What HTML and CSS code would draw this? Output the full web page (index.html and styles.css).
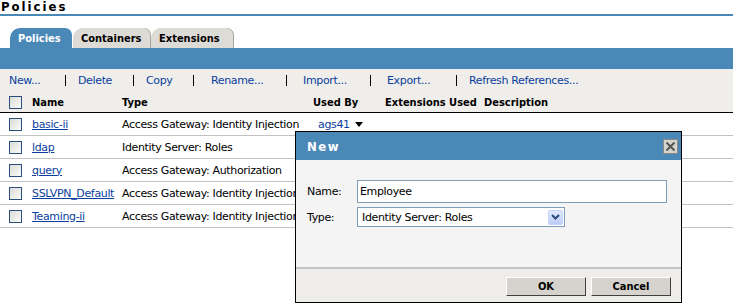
FILE: index.html
```html
<!DOCTYPE html>
<html>
<head>
<meta charset="utf-8">
<link rel="stylesheet" href="styles.css">
</head>
<body>
<div class="page">
  <div class="title">Policies</div>
  <div class="tabs">
    <div class="tab active t1">Policies</div>
    <div class="tab t2">Containers</div>
    <div class="tab t3">Extensions</div>
  </div>
  <div class="bluebar"></div>
  <div class="toolarea">
    <div class="toolbar">
      <a class="tl w56">New...</a><span class="sep s13"></span>
      <a class="tl w55">Delete</a><span class="sep s13"></span>
      <a class="tl w47">Copy</a><span class="sep s18"></span>
      <a class="tl w75">Rename...</a><span class="sep s17"></span>
      <a class="tl w67">Import...</a><span class="sep s17"></span>
      <a class="tl w69">Export...</a><span class="sep s13"></span>
      <a class="tl">Refresh References...</a>
    </div>
    <div class="row head">
      <span class="c-chk"><span class="cb"></span></span>
      <span class="c-name">Name</span>
      <span class="c-type">Type</span>
      <span class="c-used">Used By</span>
      <span class="c-ext">Extensions Used</span>
      <span class="c-desc">Description</span>
    </div>
  </div>
  <div class="row">
    <span class="c-chk"><span class="cb"></span></span>
    <span class="c-name"><a>basic-ii</a></span>
    <span class="c-type">Access Gateway: Identity Injection</span>
    <span class="c-used"><a class="plain">ags41</a><span class="tri"></span></span>
  </div>
  <div class="row">
    <span class="c-chk"><span class="cb"></span></span>
    <span class="c-name"><a>ldap</a></span>
    <span class="c-type">Identity Server: Roles</span>
  </div>
  <div class="row">
    <span class="c-chk"><span class="cb"></span></span>
    <span class="c-name"><a>query</a></span>
    <span class="c-type">Access Gateway: Authorization</span>
  </div>
  <div class="row">
    <span class="c-chk"><span class="cb"></span></span>
    <span class="c-name"><a>SSLVPN_Default</a></span>
    <span class="c-type">Access Gateway: Identity Injection</span>
  </div>
  <div class="row">
    <span class="c-chk"><span class="cb"></span></span>
    <span class="c-name"><a>Teaming-ii</a></span>
    <span class="c-type">Access Gateway: Identity Injection</span>
  </div>

  <div class="dialog">
    <div class="dlg-title">
      <span>New</span>
      <span class="close">
        <svg width="11" height="11" viewBox="0 0 11 11"><path d="M1.5 1.5 L9.5 9.5 M9.5 1.5 L1.5 9.5" stroke="#555" stroke-width="2"/></svg>
      </span>
    </div>
    <div class="dlg-body">
      <div class="frow">
        <label>Name:</label>
        <div class="input">Employee</div>
      </div>
      <div class="frow">
        <label>Type:</label>
        <div class="select">
          <span>Identity Server: Roles</span>
          <span class="drop">
            <svg width="9" height="6" viewBox="0 0 9 6"><path d="M1 1 L4.5 4.5 L8 1" stroke="#2d4a7a" stroke-width="2" fill="none"/></svg>
          </span>
        </div>
      </div>
    </div>
    <div class="dlg-foot">
      <button class="btn">OK</button>
      <button class="btn">Cancel</button>
    </div>
  </div>
</div>
</body>
</html>
```
FILE: styles.css
```css
html, body { margin: 0; padding: 0; background: #fff; }
body {
  font-family: "DejaVu Sans", sans-serif;
  font-size: 11px;
  letter-spacing: -0.35px;
  color: #000;
}
.page { position: relative; width: 733px; height: 303px; overflow: hidden; }

.title {
  height: 14px;
  line-height: 14px;
  font-family: "DejaVu Sans Condensed", "DejaVu Sans", sans-serif;
  font-weight: bold;
  font-size: 13px;
  letter-spacing: 2px;
  padding-left: 1px;
  border-bottom: 2px solid #4a88b8;
}

.tabs {
  display: flex;
  margin-top: 12px;
  padding-left: 10px;
  height: 20px;
  align-items: flex-end;
}
.tab {
  height: 20px;
  line-height: 21px;
  font-family: "DejaVu Sans Condensed", "DejaVu Sans", sans-serif;
  font-weight: bold;
  letter-spacing: 0;
  background: #dddbd5;
  border-radius: 10px 7px 0 0;
  box-sizing: border-box;
  padding-left: 8px;
  margin-right: 1px;
  box-shadow: 1px 0 0 #a7a59f;
}
.t1 { width: 62px; }
.t2 { width: 77px; }
.t3 { width: 82px; }
.tab.active { background: #4a88b8; color: #fff; box-shadow: none; }

.bluebar { height: 21px; background: #4a88b8; }

.toolarea { background: #efeeea; border-bottom: 1px solid #000; }
.toolbar {
  display: flex;
  align-items: center;
  height: 23px;
  padding-left: 9px;
  color: #0b3e9e;
}
.tl { color: #0b3e9e; white-space: nowrap; }
.w56 { width: 56px; }
.w55 { width: 55px; }
.w47 { width: 47px; }
.w75 { width: 75px; }
.w67 { width: 67px; }
.w69 { width: 69px; }
.sep { height: 11px; border-left: 1px solid #000; box-sizing: border-box; }
.s13 { width: 13px; }
.s17 { width: 17px; }
.s18 { width: 18px; }

.row {
  display: flex;
  align-items: center;
  height: 22px;
  border-bottom: 1px solid #c2c2c2;
  white-space: nowrap;
}
.row.head {
  height: 20px;
  border-bottom: none;
  font-family: "DejaVu Sans Condensed", "DejaVu Sans", sans-serif;
  font-weight: bold;
  letter-spacing: 0;
}
.c-chk { width: 32px; padding-left: 9px; box-sizing: border-box; display: flex; }
.cb {
  width: 11px; height: 11px;
  border: 1px solid #2b4e7c;
  background: linear-gradient(135deg, #dcdcd8, #fafaf8);
}
.c-name { width: 90px; }
.c-type { width: 191px; }
.c-used { width: 72px; display: flex; align-items: center; }
.c-ext { width: 99px; }
.row a { color: #0b3e9e; text-decoration: underline; }
.row a.plain { text-decoration: none; margin-left: 5px; }
.tri {
  width: 0; height: 0;
  border-left: 4px solid transparent;
  border-right: 4px solid transparent;
  border-top: 5px solid #000;
  margin-left: 5px;
}

.dialog {
  position: absolute;
  left: 295px; top: 131px;
  width: 385px; height: 170px;
  border: 1px solid #000;
  background: #f4f4f4;
  display: flex;
  flex-direction: column;
}
.dlg-title {
  height: 28px;
  background: #4a88b8;
  color: #fff;
  font-family: "DejaVu Sans Condensed", "DejaVu Sans", sans-serif;
  font-weight: bold;
  font-size: 13px;
  letter-spacing: 1.5px;
  display: flex;
  align-items: center;
  justify-content: space-between;
  padding: 0 3px 0 11px;
}
.close {
  width: 13px; height: 13px;
  border: 1px solid #8c8a85;
  background: #d6d4cf;
  display: flex; align-items: center; justify-content: center;
}
.dlg-body { flex: 1; padding-top: 20px; }
.frow { display: flex; align-items: center; margin-bottom: 4px; }
.frow label { width: 50px; padding-left: 11px; }
.input {
  width: 306px; height: 21px;
  border: 1px solid #7f9db9;
  background: #fff;
  padding-left: 2px;
  line-height: 21px;
}
.select {
  width: 202px; height: 18px;
  border: 1px solid #7f9db9;
  background: #fff;
  display: flex; align-items: center; justify-content: space-between;
  padding-left: 4px;
}
.drop {
  width: 15px; height: 15px;
  margin-right: 1px;
  background: linear-gradient(#e3ebfd, #bccdf6);
  border: 1px solid #c3d3fd;
  box-sizing: border-box;
  display: flex; align-items: center; justify-content: center;
  border-radius: 2px;
}
.dlg-foot {
  height: 35px;
  border-top: 2px solid #c4c4c4;
  background: #eeede9;
  display: flex;
  justify-content: flex-end;
  align-items: center;
  gap: 5px;
  padding-right: 10px;
  padding-top: 2px;
  box-sizing: border-box;
}
.btn {
  width: 80px; height: 19px;
  font-family: "DejaVu Sans Condensed", "DejaVu Sans", sans-serif;
  font-size: 11px;
  font-weight: bold;
  letter-spacing: 0;
  background: #d6d3ce;
  border: 1px solid;
  border-color: #fff #404040 #404040 #fff;
  padding: 0;
}
```
